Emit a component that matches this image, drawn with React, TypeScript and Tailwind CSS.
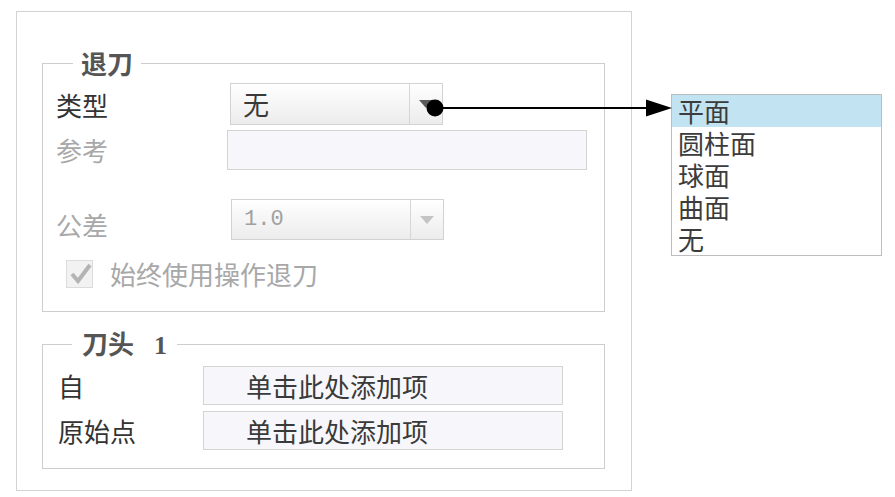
import React from 'react'

const cjk = "font-['Noto_Sans_CJK_SC','Noto_Sans',sans-serif]"

const Combo = ({ value, disabled }: { value: string; disabled?: boolean }) => (
  <div className="flex h-full w-[213px] border border-[#d2d2d2] bg-gradient-to-b from-white to-[#ececec]">
    <div className={`flex-1 flex items-center pl-[12px] ${disabled ? "font-['Liberation_Mono',monospace] text-[22px] text-[#a0a0a0]" : `${cjk} text-[26px] text-[#3a3a3a]`} leading-none`}>
      {value}
    </div>
    <div className="w-[33px] border-l border-[#d6d6d6] flex items-center justify-center">
      <svg width="16" height="10" viewBox="0 0 16 10">
        <path d="M1 1 L15 1 L8 9 Z" fill={disabled ? '#c4c4c4' : '#5a5a5a'} />
      </svg>
    </div>
  </div>
)

const Field = ({ text, className }: { text?: string; className: string }) => (
  <div className={`h-full border border-[#d4d4d4] bg-[#f7f7fb] flex items-center ${className}`}>
    {text && <span className={`${cjk} text-[26px] leading-none text-[#3a3a3a] pl-[42px]`}>{text}</span>}
  </div>
)

export default function App() {
  return (
    <div className="relative flex w-[895px] h-[497px] bg-white pl-[16px] pt-[11px]">
      <div className="w-[616px] h-[480px] border border-[#d3d3d3] pl-[25px] pt-[37px]">
        <fieldset className="w-[563px] border border-[#cdcdcd] px-[13px] pb-[23px]">
          <legend className={`${cjk} ml-[17px] px-[8px] text-[26px] leading-[28px] font-bold text-[#555]`}>退刀</legend>
          <div className="flex h-[42px] mt-[6px] items-center">
            <span className={`${cjk} w-[174px] text-[26px] leading-none text-[#333] pt-[2px]`}>类型</span>
            <Combo value="无" />
          </div>
          <div className="flex h-[40px] mt-[5px] items-center">
            <span className={`${cjk} w-[171px] text-[26px] leading-none text-[#a8a8a8]`}>参考</span>
            <Field className="w-[360px]" />
          </div>
          <div className="flex h-[41px] mt-[29px] items-center">
            <span className={`${cjk} w-[175px] text-[26px] leading-none text-[#a8a8a8] mt-[10px]`}>公差</span>
            <Combo value="1.0" disabled />
          </div>
          <div className="flex h-[28px] mt-[20px] items-center pl-[10px]">
            <div className="w-[27px] h-[28px] border border-[#dcdcdc] bg-[#f2f2f2] flex items-center justify-center">
              <svg width="24" height="22" viewBox="0 0 24 22">
                <path d="M4 11 L10 18 L22 2" fill="none" stroke="#b4b4b4" strokeWidth="4" strokeLinejoin="miter" />
              </svg>
            </div>
            <span className={`${cjk} ml-[17px] text-[26px] leading-none text-[#a8a8a8]`}>始终使用操作退刀</span>
          </div>
        </fieldset>

        <fieldset className="w-[563px] mt-[17px] border border-[#cdcdcd] px-[15px] pb-[18px]">
          <legend className={`${cjk} ml-[14px] px-[10px] text-[26px] leading-[28px] font-bold text-[#555]`}>
            刀头<span className="ml-[20px] font-['Liberation_Serif',serif]">1</span>
          </legend>
          <div className="flex h-[39px] mt-[6px] items-center">
            <span className={`${cjk} w-[145px] text-[26px] leading-none text-[#333]`}>自</span>
            <Field text="单击此处添加项" className="w-[360px]" />
          </div>
          <div className="flex h-[39px] mt-[6px] items-center">
            <span className={`${cjk} w-[145px] text-[26px] leading-none text-[#333]`}>原始点</span>
            <Field text="单击此处添加项" className="w-[360px]" />
          </div>
        </fieldset>
      </div>

      <div className="ml-[39px] mt-[83px] w-[211px] h-[162px] border border-[#bdbdbd] bg-white">
        {['平面', '圆柱面', '球面', '曲面', '无'].map((t, i) => (
          <div
            key={t}
            className={`${cjk} h-[32px] pl-[6px] flex items-center text-[26px] leading-none text-[#3c3c3c] ${i === 0 ? 'bg-[#c2e3f1]' : ''}`}
          >
            {t}
          </div>
        ))}
      </div>

      <svg className="absolute left-[424px] top-[98px]" width="252" height="22" viewBox="0 0 252 22">
        <circle cx="11" cy="10" r="8.5" fill="#000" />
        <line x1="11" y1="10" x2="224" y2="10" stroke="#000" strokeWidth="2" />
        <path d="M222 1.5 L248 10 L222 18.5 Z" fill="#000" />
      </svg>
    </div>
  )
}
